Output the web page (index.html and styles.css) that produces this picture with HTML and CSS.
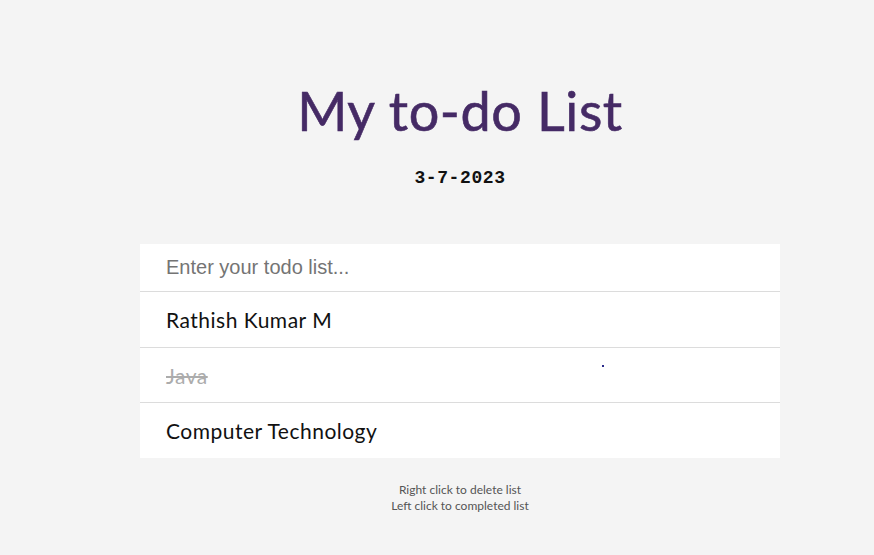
FILE: index.html
```html
<!DOCTYPE html>
<html>
<head>
<meta charset="utf-8">
<link rel="stylesheet" href="styles.css">
</head>
<body>
<main class="app">
  <h1 class="title">My to-do List</h1>
  <div class="date">3-7-2023</div>
  <section class="list">
    <input class="entry" type="text" placeholder="Enter your todo list...">
    <div class="item">Rathish Kumar M</div>
    <div class="item done">Java</div>
    <div class="item">Computer Technology</div>
  </section>
  <footer class="hint">
    <div>Right click to delete list</div>
    <div>Left click to completed list</div>
  </footer>
</main>
<span class="stray"></span>
</body>
</html>
```
FILE: styles.css
```css
html, body {
  margin: 0;
  padding: 0;
  background: #f4f4f4;
}
body {
  font-family: "Lato", "Open Sans", sans-serif;
  position: relative;
  height: 555px;
  overflow: hidden;
}
.app {
  width: 640px;
  margin-left: 140px;
  padding-top: 79px;
  display: flex;
  flex-direction: column;
  align-items: center;
}
.title {
  margin: 0;
  font-family: "Lato", sans-serif;
  font-weight: 400;
  font-size: 54px;
  line-height: 64px;
  color: #452a65;
  letter-spacing: 0.6px;
  -webkit-text-stroke: 0.6px #452a65;
}
.date {
  margin-top: 25px;
  font-family: "Liberation Mono", monospace;
  font-weight: bold;
  font-size: 18px;
  letter-spacing: 0.6px;
  line-height: 20px;
  color: #111;
}
.list {
  margin-top: 56px;
  width: 100%;
  background: #fff;
  display: flex;
  flex-direction: column;
}
.entry {
  box-sizing: border-box;
  height: 48px;
  border: none;
  border-bottom: 1px solid #dcdcdc;
  padding: 0 26px;
  font-family: "Liberation Sans", Arial, sans-serif;
  font-size: 20px;
  color: #333;
  background: #fff;
  outline: none;
}
.entry::placeholder {
  color: #747474;
}
.item {
  box-sizing: border-box;
  height: 55px;
  padding: 0 26px;
  display: flex;
  align-items: center;
  font-size: 21px;
  color: #111;
  border-bottom: 1px solid #dcdcdc;
  letter-spacing: 0.5px;
}
.entry + .item {
  height: 56px;
}
.item:last-child {
  border-bottom: none;
}
.item.done {
  color: #acacac;
  text-decoration: line-through;
}
.hint {
  margin-top: 24px;
  text-align: center;
  font-size: 12px;
  line-height: 16px;
  color: #555;
}
.stray {
  position: absolute;
  left: 602px;
  top: 365px;
  width: 2px;
  height: 2px;
  background: #2a2a8a;
}
```
